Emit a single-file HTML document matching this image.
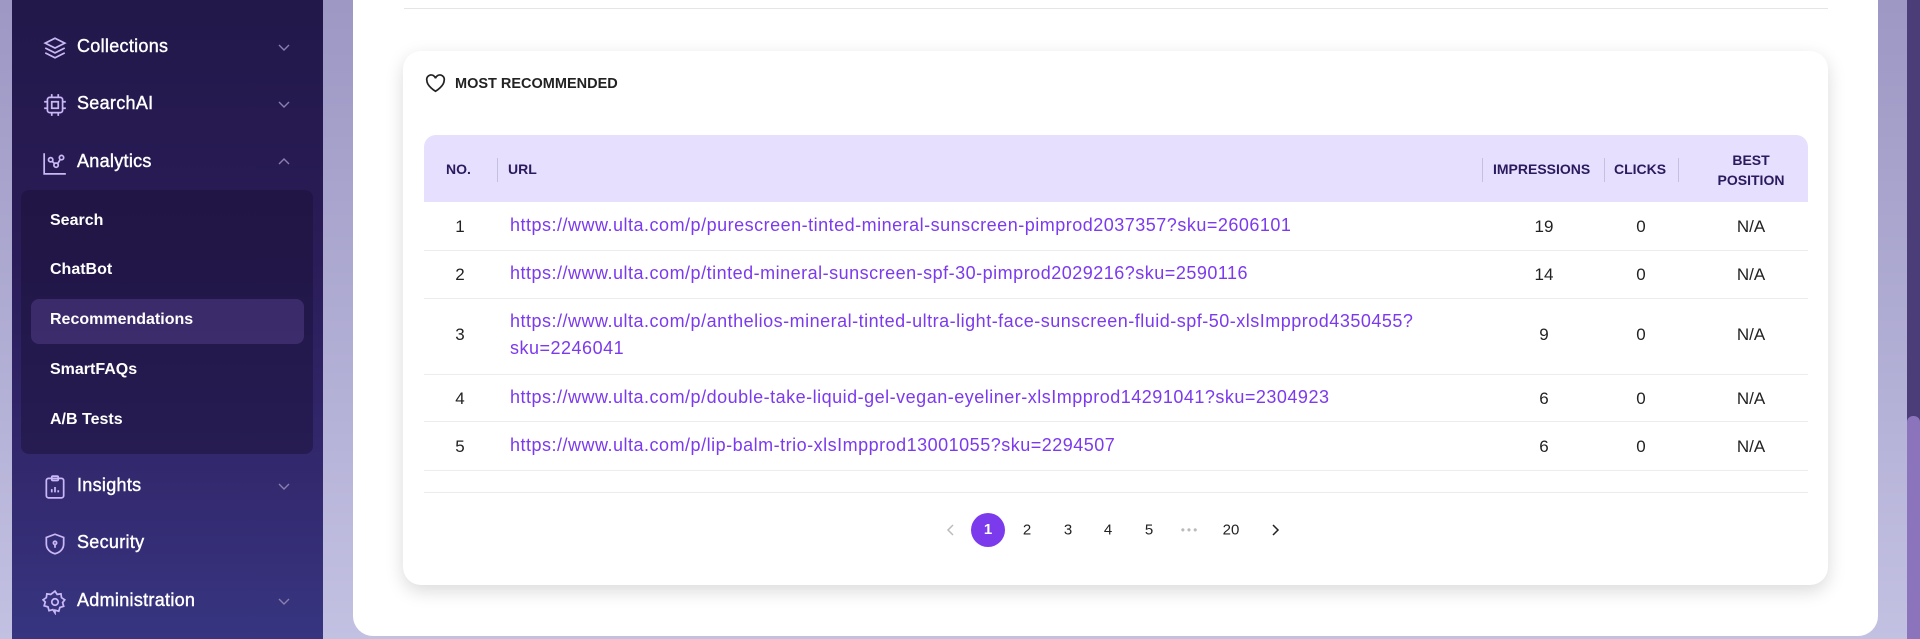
<!DOCTYPE html>
<html><head><meta charset="utf-8"><style>
*{box-sizing:border-box;margin:0;padding:0}
body{width:1920px;height:639px;overflow:hidden;font-family:"Liberation Sans",sans-serif;background:linear-gradient(180deg,#9d98c4 0%,#b3b0d6 60%,#c3c1e2 100%);position:relative}
.sb{position:absolute;left:12px;top:0;width:311px;height:639px;background:linear-gradient(180deg,#221849 0%,#2a1c58 40%,#33296f 75%,#373580 100%)}
.it{position:absolute;left:0;width:311px;color:#fff;font-size:18px;font-weight:normal;letter-spacing:0.3px;-webkit-text-stroke:0.4px #fff}
.it svg.ic{position:absolute;left:30px;top:-12px}
.it span{position:absolute;left:65px;top:-11px}
.it .ch{position:absolute;left:264px;top:-8px}
.sub{position:absolute;left:9px;top:190px;width:292px;height:264px;background:rgba(25,15,50,0.45);border-radius:8px}
.si{position:absolute;left:38px;color:#fff;font-size:16px;font-weight:bold}
.hl{position:absolute;left:19px;top:299px;width:273px;height:45px;background:rgba(110,80,170,0.35);border-radius:8px}
.main{position:absolute;left:353px;top:-20px;width:1525px;height:656px;background:#fff;border-radius:20px}
.rs{position:absolute;left:1907px;top:0;width:13px;height:639px;background:#4a3d78}
.th{position:absolute;left:1907px;top:416px;width:13px;height:223px;background:#8b74bb;border-radius:6px 6px 0 0}
.line{position:absolute;left:404px;top:8px;width:1424px;height:1px;background:#e5e5e5}
.card{position:absolute;left:403px;top:51px;width:1425px;height:534px;background:#fff;border-radius:18px;box-shadow:0 6px 18px rgba(0,0,0,0.15)}
.title{position:absolute;left:52px;top:25px;font-size:14.5px;font-weight:bold;color:#222}
.hd{position:absolute;left:21px;top:84px;width:1384px;height:67px;background:#e6dffd;border-radius:12px 12px 0 0}
.hc{position:absolute;font-size:14px;font-weight:bold;color:#2a1a5e;text-align:center}
.sep{position:absolute;top:23px;width:1px;height:24px;background:#c5bfe0}
.row{position:absolute;left:21px;width:1384px;border-bottom:1px solid #ececec}
.c{position:absolute;font-size:17px;color:#222;text-align:center}
.u{position:absolute;left:86px;font-size:18px;letter-spacing:0.5px;color:#7c3aed;line-height:27px}
.pg{position:absolute;top:530px;font-size:15px;color:#222;transform:translate(-50%,-50%)}
</style></head><body>
<div class="sb">
 <div class="it" style="top:47px"><svg class="ic" width="26" height="26" viewBox="0 0 24 24" fill="none" stroke="#c9b8f5" stroke-width="1.6"><path d="M12 3l9 4.5-9 4.5-9-4.5z"/><path d="M3 12l9 4.5 9-4.5"/><path d="M3 16.5l9 4.5 9-4.5"/></svg><span>Collections</span><svg class="ch" width="16" height="16" viewBox="0 0 16 16" fill="none" stroke="#8a80b0" stroke-width="1.4"><path d="M3 6l5 5 5-5"/></svg></div>
 <div class="it" style="top:104px"><svg class="ic" width="26" height="26" viewBox="0 0 24 24" fill="none" stroke="#c9b8f5" stroke-width="1.6"><rect x="5" y="5" width="14" height="14" rx="2"/><rect x="9" y="9" width="6" height="6"/><path d="M9 2v3M15 2v3M9 19v3M15 19v3M2 9h3M2 15h3M19 9h3M19 15h3"/></svg><span>SearchAI</span><svg class="ch" width="16" height="16" viewBox="0 0 16 16" fill="none" stroke="#8a80b0" stroke-width="1.4"><path d="M3 6l5 5 5-5"/></svg></div>
 <div class="it" style="top:162px"><svg class="ic" width="26" height="26" viewBox="0 0 24 24" fill="none" stroke="#c9b8f5" stroke-width="1.6"><path d="M2 3v19h20"/><circle cx="8" cy="9" r="2"/><circle cx="13" cy="14" r="2"/><circle cx="18" cy="7" r="2"/><path d="M9.5 10.5l2 2M14.5 12.5l2.5-4"/></svg><span>Analytics</span><svg class="ch" width="16" height="16" viewBox="0 0 16 16" fill="none" stroke="#8a80b0" stroke-width="1.4"><path d="M3 10l5-5 5 5"/></svg></div>
 <div class="sub"></div>
 <div class="hl"></div>
 <div class="si" style="top:212px">Search</div>
 <div class="si" style="top:261px">ChatBot</div>
 <div class="si" style="top:311px">Recommendations</div>
 <div class="si" style="top:361px">SmartFAQs</div>
 <div class="si" style="top:411px">A/B Tests</div>
 <div class="it" style="top:486px"><svg class="ic" width="26" height="26" viewBox="0 0 24 24" fill="none" stroke="#c9b8f5" stroke-width="1.6"><rect x="4" y="4" width="16" height="18" rx="2"/><rect x="9" y="2" width="6" height="4" rx="1"/><path d="M9 17v-3M12 17v-5M15 17v-2"/></svg><span>Insights</span><svg class="ch" width="16" height="16" viewBox="0 0 16 16" fill="none" stroke="#8a80b0" stroke-width="1.4"><path d="M3 6l5 5 5-5"/></svg></div>
 <div class="it" style="top:543px"><svg class="ic" width="26" height="26" viewBox="0 0 24 24" fill="none" stroke="#c9b8f5" stroke-width="1.6"><path d="M12 3l8 3v6c0 5-4 8-8 9-4-1-8-4-8-9V6z"/><circle cx="12" cy="11" r="1.5"/><path d="M12 12.5v3"/></svg><span>Security</span></div>
 <div class="it" style="top:601px"><svg class="ic" width="26" height="26" viewBox="0 0 24 24" fill="none" stroke="#c9b8f5" stroke-width="1.6"><circle cx="12" cy="12" r="3"/><path d="M12 2l2 3 3.5-.5.5 3.5 3 2-2 2.5 1 3.5-3.5 1-1 3.5-3.5-1L12 22l-2-3-3.5 1-1-3.5-3.5-1 1-3.5L1 10l3-2 .5-3.5L8 5z"/></svg><span>Administration</span><svg class="ch" width="16" height="16" viewBox="0 0 16 16" fill="none" stroke="#8a80b0" stroke-width="1.4"><path d="M3 6l5 5 5-5"/></svg></div>
</div>
<div class="main"></div>
<div class="line"></div>
<div class="rs"></div><div class="th"></div>
<div class="card">
 <svg style="position:absolute;left:22px;top:23px" width="21" height="19" viewBox="0 0 24 22" fill="none" stroke="#222" stroke-width="2"><path d="M12 20S2 14 2 7.5A5 5 0 0 1 12 5a5 5 0 0 1 10 2.5C22 14 12 20 12 20z"/></svg>
 <div class="title">MOST RECOMMENDED</div>
 <div class="hd">
  <div class="hc" style="left:22px;top:26px">NO.</div>
  <div class="sep" style="left:73px"></div>
  <div class="hc" style="left:84px;top:26px">URL</div>
  <div class="sep" style="left:1058px"></div>
  <div class="hc" style="left:1069px;top:26px">IMPRESSIONS</div>
  <div class="sep" style="left:1180px"></div>
  <div class="hc" style="left:1190px;top:26px">CLICKS</div>
  <div class="sep" style="left:1254px"></div>
  <div class="hc" style="left:1270px;top:15px;width:114px;line-height:20px">BEST<br>POSITION</div>
 </div>
 <div class="row" style="top:151px;height:49px"><div class="c" style="left:0;width:72px;top:15px">1</div><div class="u" style="top:10px">https://www.ulta.com/p/purescreen-tinted-mineral-sunscreen-pimprod2037357?sku=2606101</div><div class="c" style="left:1080px;width:80px;top:15px">19</div><div class="c" style="left:1180px;width:74px;top:15px">0</div><div class="c" style="left:1270px;width:114px;top:15px">N/A</div></div>
 <div class="row" style="top:200px;height:48px"><div class="c" style="left:0;width:72px;top:14px">2</div><div class="u" style="top:9px">https://www.ulta.com/p/tinted-mineral-sunscreen-spf-30-pimprod2029216?sku=2590116</div><div class="c" style="left:1080px;width:80px;top:14px">14</div><div class="c" style="left:1180px;width:74px;top:14px">0</div><div class="c" style="left:1270px;width:114px;top:14px">N/A</div></div>
 <div class="row" style="top:248px;height:76px"><div class="c" style="left:0;width:72px;top:26px">3</div><div class="u" style="top:9px">https://www.ulta.com/p/anthelios-mineral-tinted-ultra-light-face-sunscreen-fluid-spf-50-xlsImpprod4350455?<br>sku=2246041</div><div class="c" style="left:1080px;width:80px;top:26px">9</div><div class="c" style="left:1180px;width:74px;top:26px">0</div><div class="c" style="left:1270px;width:114px;top:26px">N/A</div></div>
 <div class="row" style="top:324px;height:47px"><div class="c" style="left:0;width:72px;top:14px">4</div><div class="u" style="top:9px">https://www.ulta.com/p/double-take-liquid-gel-vegan-eyeliner-xlsImpprod14291041?sku=2304923</div><div class="c" style="left:1080px;width:80px;top:14px">6</div><div class="c" style="left:1180px;width:74px;top:14px">0</div><div class="c" style="left:1270px;width:114px;top:14px">N/A</div></div>
 <div class="row" style="top:371px;height:49px"><div class="c" style="left:0;width:72px;top:15px">5</div><div class="u" style="top:10px">https://www.ulta.com/p/lip-balm-trio-xlsImpprod13001055?sku=2294507</div><div class="c" style="left:1080px;width:80px;top:15px">6</div><div class="c" style="left:1180px;width:74px;top:15px">0</div><div class="c" style="left:1270px;width:114px;top:15px">N/A</div></div>
 <div class="row" style="top:420px;height:22px"></div>
</div>
<svg style="position:absolute;left:944px;top:523px" width="14" height="14" viewBox="0 0 14 14" fill="none" stroke="#bbb" stroke-width="1.5"><path d="M9 2L4 7l5 5"/></svg>
<div style="position:absolute;left:971px;top:513px;width:34px;height:34px;border-radius:50%;background:#7c3aed;color:#fff;font-size:15px;font-weight:bold;text-align:center;line-height:34px">1</div>
<div class="pg" style="left:1027px">2</div>
<div class="pg" style="left:1068px">3</div>
<div class="pg" style="left:1108px">4</div>
<div class="pg" style="left:1149px">5</div>
<div class="pg" style="left:1190px;color:#bbb;font-size:12px;letter-spacing:2px">•••</div>
<div class="pg" style="left:1231px">20</div>
<svg style="position:absolute;left:1268px;top:523px" width="14" height="14" viewBox="0 0 14 14" fill="none" stroke="#222" stroke-width="1.5"><path d="M5 2l5 5-5 5"/></svg>
</body></html>
